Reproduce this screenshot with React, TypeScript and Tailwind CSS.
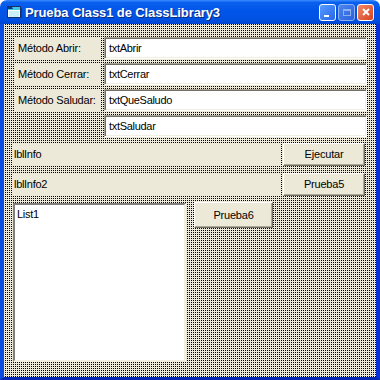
import React from "react";

const font = { fontFamily: '"Liberation Sans", Arial, sans-serif' };

function Label({ text }: { text: string }) {
  return (
    <div className="w-[86px] h-[21px] bg-[#ece9d8] flex items-center pl-[3px] text-[11px] tracking-[-0.2px] text-black self-center">
      {text}
    </div>
  );
}

function TextBox({ text }: { text: string }) {
  return (
    <div className="w-[263px] h-[22px] bg-white border border-t-[#aca899] border-l-[#aca899] border-b-white border-r-white shadow-[inset_1px_1px_0_#716f64,inset_-1px_-1px_0_#f1efe2] flex items-center pl-[4px] text-[11px] tracking-[-0.3px] text-black">
      {text}
    </div>
  );
}

function Button({ text, w, h }: { text: string; w: string; h: string }) {
  return (
    <div
      className={`${w} ${h} bg-[#ece9d8] border border-t-white border-l-white border-b-[#716f64] border-r-[#716f64] shadow-[inset_-1px_-1px_0_#aca899] flex items-center justify-center text-[11px] tracking-[-0.2px] text-black`}
    >
      {text}
    </div>
  );
}

export default function App() {
  return (
    <div className="w-[380px] h-[380px] bg-white" style={font}>
      <div className="w-full h-full flex flex-col rounded-t-[7px] overflow-hidden">
        {/* Title bar */}
        <div className="h-[24px] shrink-0 flex items-center bg-[linear-gradient(to_bottom,#3b8cff_0%,#0a60ee_10%,#0055e8_45%,#0052e2_80%,#0044d0_100%)] pl-[7px] pr-[6px]">
          <svg width="15" height="13" viewBox="0 0 15 13" className="mr-[3px] shrink-0">
            <rect x="0.5" y="0.5" width="13" height="11" fill="#ffffff" stroke="#18306a" />
            <rect x="1" y="1" width="12" height="3" fill="#3fc8e6" />
            <path d="M1 1 L5 1 L6 3 L1 3 Z" fill="#0a3a8a" />
            <rect x="2" y="5" width="10" height="6" fill="#c8f0fb" />
            <rect x="14" y="2" width="1" height="10" fill="#0a2a70" opacity="0.6" />
          </svg>
          <span className="text-white font-bold text-[13px] tracking-[-0.1px] [text-shadow:1px_1px_0_#0a2a80] leading-none">
            Prueba Class1 de ClassLibrary3
          </span>
          <div className="ml-auto flex gap-[2px]">
            <div className="w-[17px] h-[17px] rounded-[3px] border border-white bg-[linear-gradient(135deg,#5a9cff,#2566e8)] relative">
              <div className="absolute left-[4px] bottom-[3px] w-[5px] h-[2px] bg-white" />
            </div>
            <div className="w-[17px] h-[17px] rounded-[3px] border border-[#8fb0f0] bg-[linear-gradient(135deg,#4a86f0,#2a62dc)] flex items-center justify-center">
              <div className="w-[8px] h-[7px] border border-[#8fb0f0] border-t-2" />
            </div>
            <div className="w-[17px] h-[17px] rounded-[3px] border border-white bg-[linear-gradient(135deg,#f08a6a,#d8421e)] flex items-center justify-center">
              <svg width="8" height="8" viewBox="0 0 8 8">
                <path d="M1 1 L7 7 M7 1 L1 7" stroke="white" strokeWidth="1.8" />
              </svg>
            </div>
          </div>
        </div>
        {/* Frame + client */}
        <div className="flex-1 flex flex-col border-x-4 border-b-[3px] border-l-[#0b4ce0] border-r-[#0831d9] border-b-[#0628b0]">
          <div className="flex-1 bg-[#ece9d8] bg-[conic-gradient(#000_25%,transparent_0)] bg-size-[2px_2px] pl-[8px] pt-[13px] text-black">
            <div className="ml-[3px] flex flex-col gap-[4px]">
              <div className="flex gap-[3px]">
                <Label text="Método Abrir:" />
                <TextBox text="txtAbrir" />
              </div>
              <div className="flex gap-[3px]">
                <Label text="Método Cerrar:" />
                <TextBox text="txtCerrar" />
              </div>
              <div className="flex gap-[3px]">
                <Label text="Método Saludar:" />
                <TextBox text="txtQueSaludo" />
              </div>
              <div className="flex gap-[3px]">
                <div className="w-[86px]" />
                <TextBox text="txtSaludar" />
              </div>
            </div>
            <div className="flex gap-[3px] mt-[6px]">
              <div className="w-[268px] h-[23px] bg-[#ece9d8] flex items-center pl-[2px] text-[11px] tracking-[-0.3px]">
                lblInfo
              </div>
              <Button text="Ejecutar" w="w-[82px]" h="h-[23px]" />
            </div>
            <div className="flex gap-[3px] mt-[7px]">
              <div className="w-[268px] h-[23px] bg-[#ece9d8] flex items-center pl-[2px] text-[11px] tracking-[-0.3px]">
                lblInfo2
              </div>
              <Button text="Prueba5" w="w-[82px]" h="h-[23px]" />
            </div>
            <div className="flex gap-[8px] mt-[7px] items-start">
              <div className="ml-[1px] w-[173px] h-[159px] bg-white border-2 border-t-[#808080] border-l-[#808080] border-b-[#f1efe2] border-r-[#f1efe2] pl-[2px] pt-[1px] text-[11px] tracking-[-0.3px]">
                List1
              </div>
              <div className="mt-[-1px]">
                <Button text="Prueba6" w="w-[79px]" h="h-[26px]" />
              </div>
            </div>
          </div>
        </div>
      </div>
    </div>
  );
}
